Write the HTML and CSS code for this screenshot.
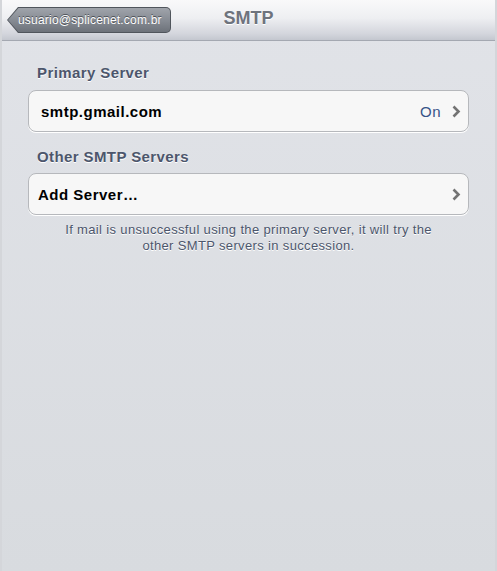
FILE: index.html
```html
<!DOCTYPE html>
<html>
<head>
<meta charset="utf-8">
<link rel="stylesheet" href="styles.css">
</head>
<body>
<div class="screen">
  <header class="navbar">
    <div class="back">
      <div class="back-inner">usuario@splicenet.com.br</div>
    </div>
    <div class="title">SMTP</div>
  </header>
  <main class="content">
    <div class="section-title">Primary Server</div>
    <div class="cell cell-primary">
      <span class="cell-label">smtp.gmail.com</span>
      <span class="cell-value">On</span>
      <svg class="chevron" width="9" height="13" viewBox="0 0 9 13"><path d="M1.5 1.5 L6.5 6.5 L1.5 11.5" fill="none" stroke="#737373" stroke-width="2.6"/></svg>
    </div>
    <div class="section-title second">Other SMTP Servers</div>
    <div class="cell cell-add">
      <span class="cell-label">Add Server…</span>
      <svg class="chevron" width="9" height="13" viewBox="0 0 9 13"><path d="M1.5 1.5 L6.5 6.5 L1.5 11.5" fill="none" stroke="#737373" stroke-width="2.6"/></svg>
    </div>
    <p class="footer">If mail is unsuccessful using the primary server, it will try the<br>other SMTP servers in succession.</p>
  </main>
</div>
</body>
</html>
```

FILE: styles.css
```css
html, body {
  margin: 0;
  padding: 0;
}
body {
  width: 497px;
  height: 571px;
  overflow: hidden;
  font-family: "Liberation Sans", Arial, sans-serif;
}
.screen {
  width: 497px;
  height: 571px;
  display: flex;
  flex-direction: column;
  background: linear-gradient(to bottom, #e1e3e8 0%, #d8dbdf 100%);
  border-left: 2px solid #d4d6da;
  border-right: 2px solid #d4d6da;
  box-sizing: border-box;
}
.navbar {
  height: 41px;
  flex: none;
  position: relative;
  display: flex;
  align-items: center;
  justify-content: center;
  background: linear-gradient(to bottom, #f9f9fa 0%, #eeeff2 45%, #d3d5dc 85%, #c4c7cf 100%);
  border-bottom: 1px solid #a4a8b1;
  box-sizing: border-box;
}
.title {
  font-weight: bold;
  font-size: 18px;
  color: #6e737d;
  text-shadow: 0 1px 0 #ffffff;
  margin-top: -3px;
}
.back {
  position: absolute;
  left: 5px;
  top: 7px;
  width: 164px;
  height: 26px;
  box-sizing: border-box;
  padding: 1px;
  background: #50555c;
  border-radius: 0 5px 5px 0;
  clip-path: polygon(0 50%, 11px 0, 100% 0, 100% 100%, 11px 100%);
}
.back-inner {
  height: 100%;
  box-sizing: border-box;
  background: linear-gradient(to bottom, #a0a4ab 0%, #878c94 50%, #6d727a 100%);
  border-radius: 0 4px 4px 0;
  clip-path: polygon(0 50%, 10.5px 0, 100% 0, 100% 100%, 10.5px 100%);
  display: flex;
  align-items: center;
  padding-left: 10px;
  color: #ffffff;
  font-size: 12px;
  letter-spacing: 0.2px;
  text-shadow: 0 -1px 0 #4a4e55;
}
.content {
  padding: 24px 26px 0 26px;
  display: flex;
  flex-direction: column;
}
.section-title {
  font-size: 15px;
  font-weight: bold;
  letter-spacing: 0.4px;
  color: #4c566c;
  text-shadow: 0 1px 0 #ffffff;
  padding-left: 9px;
  height: 16px;
  line-height: 16px;
  margin-bottom: 9px;
}
.section-title.second {
  margin-top: 17px;
  margin-bottom: 8px;
}
.cell {
  height: 42px;
  box-sizing: border-box;
  background: #f7f7f7;
  border: 1px solid #b6b8bc;
  border-radius: 8px;
  box-shadow: 0 1px 0 #ffffff;
  display: flex;
  align-items: center;
  padding: 0 7px 0 12px;
}
.cell-add {
  padding-left: 9px;
}
.cell-label {
  flex: 1;
  font-size: 15px;
  font-weight: bold;
  letter-spacing: 0.5px;
  color: #000000;
}
.cell-value {
  font-size: 15px;
  letter-spacing: 0.5px;
  color: #385487;
  margin-right: 11px;
}
.chevron {
  display: block;
}
.footer {
  margin: 7px 0 0 0;
  text-align: center;
  font-size: 13px;
  letter-spacing: 0.35px;
  line-height: 16px;
  color: #4c566c;
  text-shadow: 0 1px 0 #ffffff;
}
```
